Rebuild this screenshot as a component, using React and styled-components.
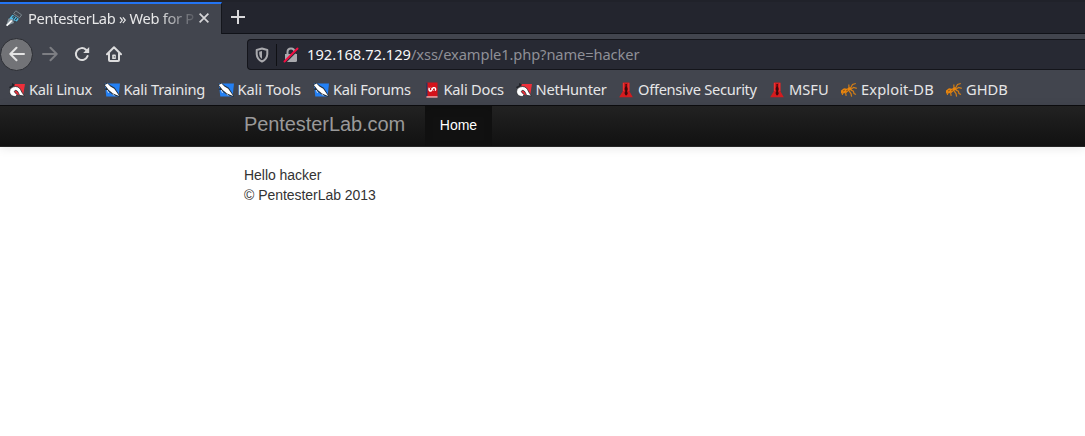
import React from 'react';
import styled, { createGlobalStyle } from 'styled-components';

const GlobalStyle = createGlobalStyle`
  * { box-sizing: border-box; }
  html, body { margin: 0; background: #fff; overflow: hidden; }
`;

const Browser = styled.div`
  height: 436px;
  overflow: hidden;
  background: #fff;
  font-family: 'Noto Sans', sans-serif;
  font-size: 14.667px;
`;

const TabBar = styled.div`
  display: flex;
  height: 34px;
  background: #23252e;
  border-top: 2px solid #20222a;
  box-shadow: inset 0 -1px #101218;
`;

const Tab = styled.div`
  display: flex;
  align-items: center;
  width: 222px;
  height: 32px;
  padding: 0 10px 3px 5px;
  background: #42454e;
  border-top: 2px solid #2374f3;
  border-right: 1px solid #14161c;
`;

const TabTitle = styled.span`
  width: 169px;
  margin-left: 5px;
  white-space: nowrap;
  line-height: 22px;
  letter-spacing: -0.32px;
  color: #e8e8e9;
  mask-image: linear-gradient(90deg, #000 130px, transparent 172px);
`;

const NewTab = styled.div`
  display: flex;
  align-items: center;
  padding: 0 0 2px 8px;
`;

const Toolbar = styled.div`
  display: flex;
  align-items: center;
  height: 40px;
  background: #42454e;
`;

const NavButtons = styled.div`
  display: flex;
  align-items: center;
  width: 247px;
`;

const BackButton = styled.div`
  display: flex;
  align-items: center;
  justify-content: center;
  width: 33px;
  height: 33px;
  margin-right: 9px;
  border: 1px solid #2c2e34;
  border-radius: 50%;
  background: #727377;
`;

const NavIcon = styled.div`
  display: flex;
  width: 16px;
  height: 16px;
  margin-right: 16px;
`;

const AddressBar = styled.div`
  display: flex;
  align-items: center;
  flex: 1;
  height: 31px;
  margin-top: 1px;
  padding-left: 6px;
  border: 1px solid #14151b;
  border-right: 0;
  border-radius: 4px 0 0 4px;
  background: #272933;
`;

const Divider = styled.div`
  width: 1px;
  height: 22px;
  margin: 0 6px 0 6px;
  background: #0f1014;
`;

const Address = styled.div`
  margin-left: 8px;
  padding-bottom: 2px;
  line-height: 22px;
  letter-spacing: -0.1px;
  white-space: nowrap;
  color: #8f9097;
`;

const Host = styled.span`
  letter-spacing: 0;
  color: #f8f8fa;
`;

const Bookmarks = styled.div`
  display: flex;
  height: 32px;
  padding: 0 0 1px 9px;
  background: #42454e;
  box-shadow: inset 0 -1px #0c0c0e;
`;

const Bookmark = styled.div`
  display: flex;
  align-items: center;
  flex: none;
  gap: 4px;
  width: ${(p) => p.$width}px;
  color: #e6e6e7;
  white-space: nowrap;
`;

const BookmarkLabel = styled.span`
  padding-bottom: 2px;
  letter-spacing: ${(p) => p.$tracking}px;
`;

const Navbar = styled.header`
  display: flex;
  height: 41px;
  padding-left: 244px;
  background: linear-gradient(#222, #111);
  border-bottom: 1px solid #252525;
  box-shadow: 0 1px 10px rgba(0, 0, 0, 0.1);
  font-family: 'Liberation Sans', Arial, sans-serif;
`;

const Brand = styled.div`
  width: 181px;
  font-size: 20px;
  line-height: 36px;
  letter-spacing: -0.08px;
  color: #999;
`;

const NavLink = styled.div`
  width: 67px;
  text-align: center;
  font-size: 14px;
  line-height: 38px;
  color: #fff;
  background: #111;
  box-shadow: inset 0 3px 8px rgba(0, 0, 0, 0.125);
`;

const Content = styled.main`
  padding: 18px 0 0 244px;
  font-family: 'Liberation Sans', Arial, sans-serif;
  font-size: 14px;
  line-height: 20px;
  letter-spacing: -0.04px;
  color: #333;
`;

const Icon = ({ size = 16, children }) => (
  <svg width={size} height={size} viewBox="0 0 16 16" fill="none">
    {children}
  </svg>
);

const PenIcon = () => (
  <Icon size={18}>
    <path d="M9.4 1 15.2 5 11 11.5 5 13.5 1 15.2 3.2 7Z" fill="#39434d" />
    <path d="M9.6 1.6 14.8 5.2 13 7.8 7.6 4.2Z" fill="#42474f" stroke="#8b969e" strokeWidth=".7" />
    <path d="M6.6 5 12.3 8.6 10.6 11 3.6 8.6Z" fill="#54bce4" />
    <path d="M3 8.5 6.8 9.4 8 12.5 1 15.2Z" fill="#87939b" />
    <path d="M1.5 14.8 6 10.2" stroke="#fff" strokeWidth="1.5" />
    <path d="M6.4 7.6q1-1.4 2.2-.3l-1.4 2M9 9.8l1.7-1.6" stroke="#23313b" strokeWidth=".9" />
  </Icon>
);

const DragonRed = () => (
  <Icon>
    <path d="M4 2h12l-1.8 11H5Z" fill="#ee2f3a" />
    <path d="m3 1 3 1.5L4.5 5 1 6.5 0 5l3-1.5Z" fill="#22242a" />
    <path d="M.6 9.5C.6 6.5 3 4.5 6.5 4.5c3.4 0 4.8 2.3 5.8 4.5.7 1.6 1.7 2.9 3.2 5.2l-5-.9C9.7 11.5 9 8.6 6.9 8.4 5.3 8.2 5 9.6 5.8 10.5l2.4 2.2-1.5 1.7C3.4 14.8.6 12.7.6 9.5Z" fill="#fff" stroke="#222429" strokeWidth=".8" />
  </Icon>
);

const DragonBlue = () => (
  <Icon>
    <path d="M.8 1.5H16l-1.4 13H2.3Z" fill="#2380f4" />
    <path d="M0 2.8 3 .8l3.5 2.5 4.3 2.5 5 8-.6 1.2-6.5-2.2-5.4-4.5L.5 7.5l1.7-1.7Z" fill="#24303d" />
    <path d="M.8 3 3.5 1.5l2.9 3 3.8 2.2 5 7.2-6.2-2.4-4.5-3.8-2-2.6Z" fill="#fff" />
    <path d="m3.2 8 1.4 3M8.5 11.8l1.8 1.8" stroke="#dfe5ee" strokeWidth=".9" />
  </Icon>
);

const BookIcon = () => (
  <Icon>
    <path d="M2 .5h11.5v15H2Z" fill="#d3131b" />
    <path d="M2 .5h1.5v14H2Z" fill="#29385e" />
    <path d="M2.5 14.4h11v1.1h-11Z" fill="#eee1e1" />
    <path d="M5.2 5.8C4.4 8.6 6.2 9.6 7.4 8.6 8.6 7.6 8 6 9.5 5.7c1.9-.4 2.6 1.1 1.8 3" stroke="#fff" strokeWidth="1.4" />
    <path d="m6.8 5.5 2.8 3.4" stroke="#fff" strokeWidth=".7" />
  </Icon>
);

const OffsecIcon = () => (
  <Icon>
    <path d="M4.8.5h6.6v8.7l3.4 6.1H1.2l3.6-6.1Z" fill="#d41b1e" />
    <path d="M7.4 2h1.5l-.2 2 1 3-.7 2.2.8 2-.9 2H7.4L6.5 11l.9-2-.8-2 .9-3Z" fill="#3c090c" />
    <path d="M5.4 1v8M10.8 1v8" stroke="#f03735" />
  </Icon>
);

const BugIcon = () => (
  <Icon>
    <path d="m0 8.5 3-2.3 3 .6L8.3 5l2.2.7-.2 2L7.5 9l-2.2 2-2.6.2-1.6 1L0 10.7Z" fill="#e8850e" />
    <path d="M8 6 7.8 2.5M9.6 6l1.9-3.5L14.8 1.5M10 7.2l2.6-1.7 3.2.9M9.8 8.1l2.6 1 .6 2.4 2 1M8 8.8l2 2.8.6 3M4.4 10l.8 3.8M1.8 10l-.4 3" stroke="#d17d17" strokeWidth="1.2" />
    <path d="m2 9 1.8-.8m1.4.7 1.8-1" stroke="#74451a" strokeWidth=".8" />
  </Icon>
);

const bookmarks = [
  ['Kali Linux', 94.5, -0.3, DragonRed],
  ['Kali Training', 114, -0.24, DragonBlue],
  ['Kali Tools', 95.5, -0.1, DragonBlue],
  ['Kali Forums', 110.5, -0.3, DragonBlue],
  ['Kali Docs', 92, -0.22, BookIcon],
  ['NetHunter', 102.5, -0.25, DragonRed],
  ['Offensive Security', 151, -0.3, OffsecIcon],
  ['MSFU', 72, 0, OffsecIcon],
  ['Exploit-DB', 105, 0.12, BugIcon],
  ['GHDB', 80, 0, BugIcon],
];

export default function App() {
  return (
    <Browser>
      <GlobalStyle />
      <TabBar>
        <Tab>
          <PenIcon />
          <TabTitle>PentesterLab » Web for P</TabTitle>
          <Icon size={14}>
            <path d="m3 3 10 10m0-10-10 10" stroke="#d5d5d7" strokeWidth="2" />
          </Icon>
        </Tab>
        <NewTab>
          <Icon>
            <path d="M8 1v14M1 8h14" stroke="#d9d9db" strokeWidth="2" />
          </Icon>
        </NewTab>
      </TabBar>
      <Toolbar>
        <NavButtons>
          <BackButton>
            <Icon>
              <path d="M15 8H1.5M7.5 1.8 1.3 8l6.2 6.2" stroke="#e4e4e4" strokeWidth="2" strokeLinecap="round" strokeLinejoin="round" />
            </Icon>
          </BackButton>
          <NavIcon>
            <Icon>
              <path d="M1 8h13.5M8.5 1.8 14.7 8l-6.2 6.2" stroke="#7d7e83" strokeWidth="2" strokeLinecap="round" strokeLinejoin="round" />
            </Icon>
          </NavIcon>
          <NavIcon>
            <Icon>
              <path d="M13.6 10A6 6 0 1 1 12 3.7L14 5.8" stroke="#dcdcdd" strokeWidth="2" strokeLinecap="round" />
              <path d="M15.2 1v6H9.2Z" fill="#dcdcdd" />
            </Icon>
          </NavIcon>
          <NavIcon>
            <Icon>
              <path d="M1 8.2 8 1.3l7 6.9M3 7.5V14q0 1 1 1h8q1 0 1-1V7.5" stroke="#dcdcdd" strokeWidth="2" strokeLinecap="round" strokeLinejoin="round" />
              <path d="M6.2 13V9.2q0-.8.8-.8h2q.8 0 .8.8V13Z" fill="#dcdcdd" />
              <path d="M8.3 10.2v1.3" stroke="#55575e" />
            </Icon>
          </NavIcon>
        </NavButtons>
        <AddressBar>
          <Icon>
            <path d="M8 1.5 13.3 3v4.2q-.3 5-5.3 7.3-5-2.3-5.3-7.3V3Z" stroke="#a9a9ad" strokeWidth="2" strokeLinejoin="round" />
            <path d="M8 4v8q-2.7-1.7-2.8-5V4.8Z" fill="#a9a9ad" />
          </Icon>
          <Divider />
          <Icon>
            <path d="M4.5 7V5q0-3.6 3.5-3.6T11.5 5v2" stroke="#a9a9ad" strokeWidth="2" />
            <path d="M2 7h12v6.5q0 1.5-1.5 1.5h-9Q2 15 2 13.5Z" fill="#a9a9ad" />
            <path d="M2.2 15.2 15.3 2.1" stroke="#272933" strokeWidth="2" />
            <path d="M1.5 14.5 14.5 1.5" stroke="#f20e42" strokeWidth="2" strokeLinecap="round" />
          </Icon>
          <Address>
            <Host>192.168.72.129</Host>/xss/example1.php?name=hacker
          </Address>
        </AddressBar>
      </Toolbar>
      <Bookmarks>
        {bookmarks.map(([label, width, tracking, Glyph]) => (
          <Bookmark key={label} $width={width}>
            <Glyph />
            <BookmarkLabel $tracking={tracking}>{label}</BookmarkLabel>
          </Bookmark>
        ))}
      </Bookmarks>
      <Navbar>
        <Brand>PentesterLab.com</Brand>
        <NavLink>Home</NavLink>
      </Navbar>
      <Content>
        <div>Hello hacker</div>
        <div>© PentesterLab 2013</div>
      </Content>
    </Browser>
  );
}
